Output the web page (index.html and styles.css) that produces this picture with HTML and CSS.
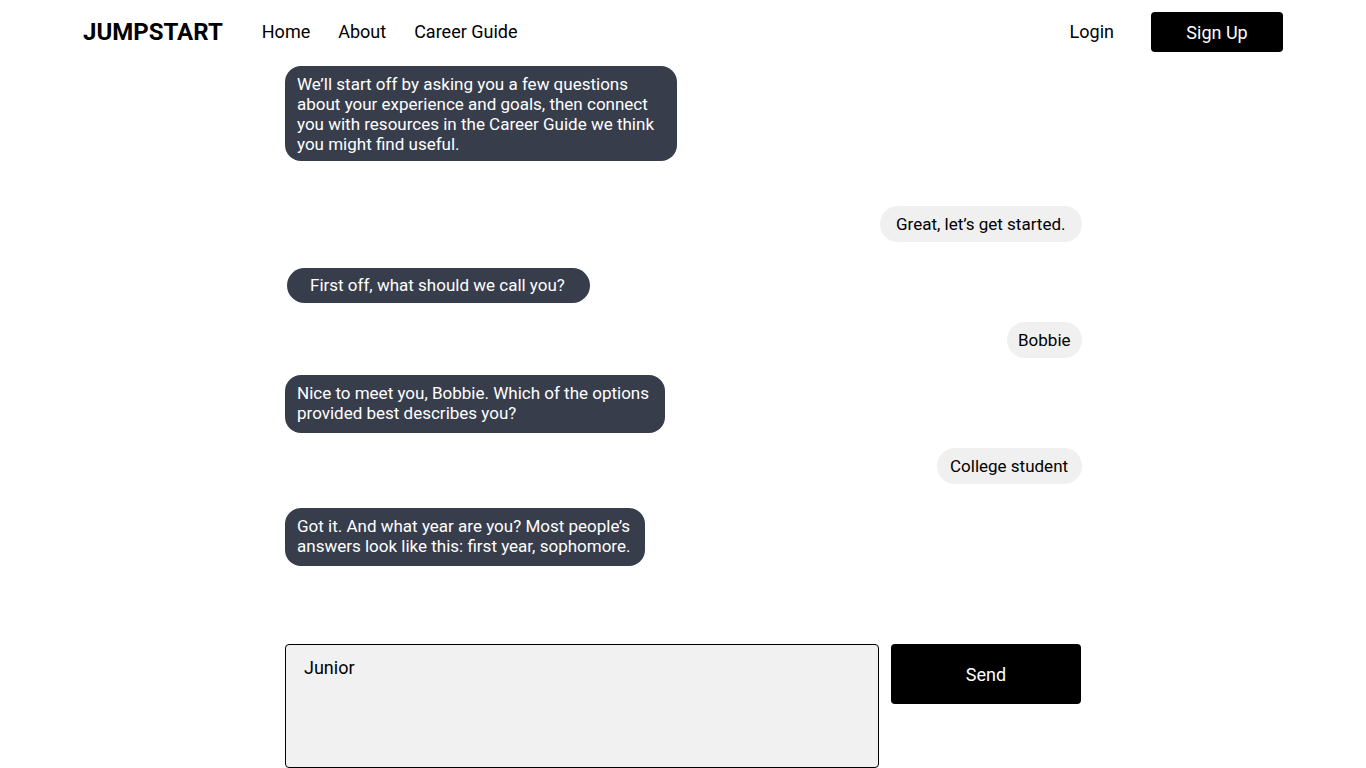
FILE: index.html
```html
<!DOCTYPE html>
<html lang="en">
<head>
<meta charset="utf-8">
<title>Jumpstart</title>
<link rel="stylesheet" href="styles.css">
</head>
<body>
<header class="topbar">
  <div class="brand">JUMPSTART</div>
  <nav class="links">
    <a href="#">Home</a>
    <a href="#">About</a>
    <a href="#">Career Guide</a>
  </nav>
  <div class="auth">
    <a href="#" class="login">Login</a>
    <a href="#" class="signup">Sign Up</a>
  </div>
</header>
<main class="chat">
  <div class="msg bot w1 gap-a">We’ll start off by asking you a few questions about your experience and goals, then connect you with resources in the Career Guide we think you might find useful.</div>
  <div class="msg user gap-b">Great, let’s get started.</div>
  <div class="msg bot pill gap-c">First off, what should we call you?</div>
  <div class="msg user u2 gap-d">Bobbie</div>
  <div class="msg bot w3 gap-e">Nice to meet you, Bobbie. Which of the options provided best describes you?</div>
  <div class="msg user u3 gap-f">College student</div>
  <div class="msg bot w4 gap-g">Got it. And what year are you? Most people’s answers look like this: first year, sophomore.</div>
  <form class="composer">
    <textarea class="input">Junior</textarea>
    <button type="button" class="send">Send</button>
  </form>
</main>
</body>
</html>
```
FILE: styles.css
```css
* { box-sizing: border-box; }
html, body { margin: 0; padding: 0; background: #fff; }
body {
  font-family: Roboto, "Liberation Sans", sans-serif;
  color: #000;
  height: 768px;
  overflow: hidden;
}
.topbar {
  height: 64px;
  display: flex;
  align-items: center;
  padding: 0 83px;
}
.brand {
  font-weight: 700;
  font-size: 24px;
  margin-right: 39px;
}
.links { display: flex; gap: 28px; }
.links a, .login {
  color: #000;
  text-decoration: none;
  font-size: 18px;
  line-height: 22px;
}
.auth {
  margin-left: auto;
  display: flex;
  align-items: center;
  gap: 37px;
}
.signup {
  display: flex;
  align-items: center;
  justify-content: center;
  width: 132px;
  height: 40px;
  background: #000;
  color: #fff;
  text-decoration: none;
  font-size: 18px;
  border-radius: 4px;
}
.chat {
  width: 796px;
  margin: 0 auto;
  display: flex;
  flex-direction: column;
}
.msg {
  font-size: 17px;
  line-height: 20px;
}
.bot {
  align-self: flex-start;
  background: #373d4b;
  color: #fff;
  border-radius: 16px;
  padding: 8px 12px;
}
.user {
  align-self: flex-end;
  background: #f0f0f0;
  color: #000;
  border-radius: 18px;
  padding: 8px 16px;
  height: 36px;
  margin-right: -1px;
}
.w1 { width: 392px; padding-top: 8px; padding-bottom: 7px; }
.w3 { width: 380px; padding-top: 8px; padding-bottom: 10px; }
.w4 { width: 360px; padding-top: 8px; padding-bottom: 10px; }
.pill {
  margin-left: 2px;
  border-radius: 18px;
  height: 35px;
  width: 303px;
  padding: 7px 23px;
}
.u2 { padding: 8px 11px; width: 75px; }
.u3 { padding: 8px 13px; }
.gap-a { margin-top: 2px; }
.gap-b { margin-top: 45px; width: 202px; }
.gap-c { margin-top: 26px; }
.gap-d { margin-top: 19px; }
.gap-e { margin-top: 17px; }
.gap-f { margin-top: 15px; width: 145px; }
.gap-g { margin-top: 24px; }
.composer {
  margin: 78px 0 0;
  display: flex;
  gap: 12px;
  align-items: flex-start;
}
.input {
  width: 594px;
  height: 124px;
  background: #f1f1f1;
  border: 1px solid #000;
  border-radius: 4px;
  padding: 13px 18px;
  font-family: Roboto, "Liberation Sans", sans-serif;
  font-size: 18px;
  line-height: 20px;
  color: #000;
  resize: none;
  outline: none;
}
.send {
  width: 190px;
  height: 60px;
  background: #000;
  color: #fff;
  border: none;
  border-radius: 4px;
  font-family: Roboto, "Liberation Sans", sans-serif;
  font-size: 18px;
}
```
